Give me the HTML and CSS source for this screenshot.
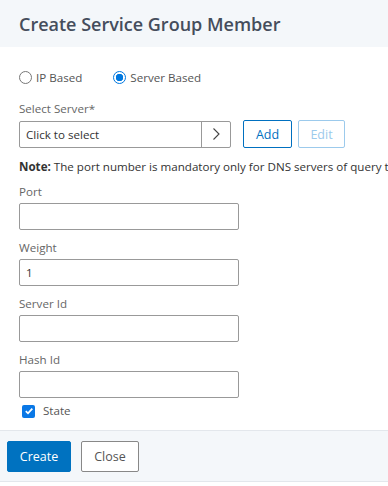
FILE: index.html
```html
<!DOCTYPE html>
<html lang="en">
<head>
    <meta charset="UTF-8">
    <meta name="viewport" content="width=device-width, initial-scale=1.0">
    <title>Create Service Group Member</title>
    <link rel="stylesheet" href="styles.css">
</head>
<body>
    <div class="dialog">
        <div class="header">
            <h1>Create Service Group Member</h1>
        </div>
        <div class="content">
            <div class="radio-row">
                <label class="radio"><span class="radio-dot"></span>IP Based</label>
                <label class="radio"><span class="radio-dot checked"></span>Server Based</label>
            </div>
            <div class="field">
                <label class="field-label">Select Server*</label>
                <div class="select-row">
                    <div class="picker">
                        <span class="picker-text">Click to select</span>
                        <span class="picker-arrow">
                            <svg width="10" height="14" viewBox="0 0 10 14"><path d="M2.5 1.5 L8 7 L2.5 12.5" fill="none" stroke="#444" stroke-width="1.1"/></svg>
                        </span>
                    </div>
                    <button class="btn btn-outline">Add</button>
                    <button class="btn btn-outline disabled">Edit</button>
                </div>
            </div>
            <p class="note"><b>Note:</b> The port number is mandatory only for DNS servers of query type SRV.</p>
            <div class="field">
                <label class="field-label">Port</label>
                <input type="text" class="text-input">
            </div>
            <div class="field">
                <label class="field-label">Weight</label>
                <input type="text" class="text-input" value="1">
            </div>
            <div class="field">
                <label class="field-label">Server Id</label>
                <input type="text" class="text-input">
            </div>
            <div class="field">
                <label class="field-label">Hash Id</label>
                <input type="text" class="text-input">
            </div>
            <label class="check">
                <span class="check-box">
                    <svg width="10" height="10" viewBox="0 0 10 10"><path d="M1.8 5.2 L4 7.3 L8.3 2.6" fill="none" stroke="#fff" stroke-width="1.8"/></svg>
                </span>
                State
            </label>
        </div>
        <div class="footer">
            <button class="btn btn-primary">Create</button>
            <button class="btn btn-default">Close</button>
        </div>
    </div>
</body>
</html>
```

FILE: styles.css
```css
body {
    margin: 0;
    font-family: "Open Sans", sans-serif;
    color: #333;
    background-color: #fff;
}
.dialog {
    width: 388px;
    overflow: hidden;
}
.header {
    height: 47px;
    background-color: #f4f7fa;
    padding: 0 19px;
    display: flex;
    align-items: center;
}
.header h1 {
    margin: 0;
    font-size: 18px;
    font-weight: 600;
    color: #454d5c;
}
.content {
    padding: 22px 19px 12px;
}
.radio-row {
    display: flex;
    gap: 31px;
    font-size: 11.6px;
    line-height: 17px;
    color: #555;
    margin-bottom: 14px;
}
.radio {
    display: flex;
    align-items: center;
    gap: 4px;
}
.radio-dot {
    width: 11px;
    height: 11px;
    border: 1px solid #777;
    border-radius: 50%;
    background: #fff;
}
.radio-dot.checked {
    border-color: #0078e0;
    background: radial-gradient(circle, #0078e0 0 3.5px, #fff 4px);
}
.field {
    margin-bottom: 9px;
}
.field-label {
    display: block;
    font-size: 11.6px;
    line-height: 17px;
    color: #666;
    margin-bottom: 3px;
}
.select-row {
    display: flex;
    gap: 12px;
    align-items: center;
}
.select-row .disabled {
    margin-left: -6px;
}
.picker {
    display: flex;
    width: 212px;
    height: 27px;
    border: 1px solid #999;
    border-radius: 2px;
    box-sizing: border-box;
}
.picker-text {
    flex: 1;
    font-size: 11.6px;
    line-height: 17px;
    color: #333;
    padding: 4px 6px;
}
.picker-arrow {
    width: 28px;
    border-left: 1px solid #999;
    display: flex;
    align-items: center;
    justify-content: center;
}
.note {
    margin: 10px 0 8px;
    font-size: 11.6px;
    line-height: 17px;
    white-space: nowrap;
    color: #333;
}
.text-input {
    display: block;
    width: 220px;
    height: 27px;
    box-sizing: border-box;
    border: 1px solid #999;
    border-radius: 2px;
    padding: 0 6px;
    font-family: "Open Sans", sans-serif;
    font-size: 11.6px;
    color: #333;
    margin: 0;
}
.check {
    display: flex;
    align-items: center;
    gap: 8px;
    font-size: 11.6px;
    line-height: 14px;
    color: #555;
    padding-left: 3px;
    margin-top: -3px;
}
.check-box {
    width: 13px;
    height: 13px;
    border-radius: 2px;
    background-color: #0a78e6;
    display: flex;
    align-items: center;
    justify-content: center;
}
.btn {
    font-family: "Open Sans", sans-serif;
    font-size: 12.5px;
    height: 29px;
    padding: 0 11px;
    border-radius: 2px;
    cursor: pointer;
    background: #fff;
}
.btn-outline {
    border: 1px solid #0070c0;
    color: #0070c0;
    width: 49px;
    padding: 0;
    height: 28px;
}
.btn-outline.disabled {
    width: 47px;
    border-color: #9ccaec;
    color: #9ccaec;
}
.btn-primary {
    background-color: #0072c0;
    border: 1px solid #0072c0;
    color: #fff;
    width: 64px;
    height: 31px;
}
.btn-default {
    border: 1px solid #888;
    color: #555;
    width: 58px;
    height: 31px;
}
.footer {
    border-top: 1px solid #e3e7ec;
    border-bottom: 1px solid #e3e7ec;
    background-color: #f4f7fa;
    height: 50px;
    padding: 0 7px;
    display: flex;
    align-items: center;
    gap: 10px;
}
```
